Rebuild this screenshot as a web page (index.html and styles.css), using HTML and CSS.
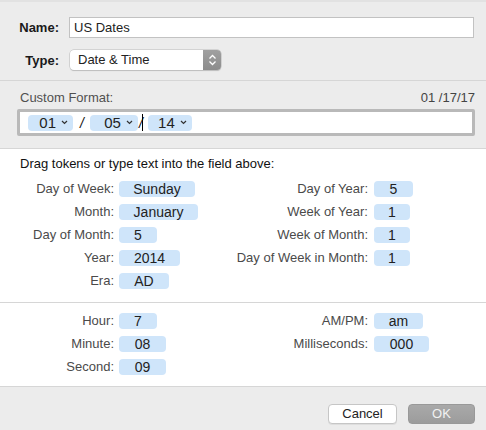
FILE: index.html
```html
<!DOCTYPE html>
<html>
<head>
<meta charset="utf-8">
<link rel="stylesheet" href="styles.css">
</head>
<body>
<div class="dialog">
  <div class="top">
    <div class="row">
      <span class="blabel">Name:</span>
      <div class="textfield">US Dates</div>
    </div>
    <div class="row row-type">
      <span class="blabel">Type:</span>
      <div class="popup">
        <span class="popup-text">Date &amp; Time</span>
        <span class="stepper">
          <svg width="9" height="12" viewBox="0 0 9 12"><path d="M1.5 4.5 L4.5 1.5 L7.5 4.5 M1.5 7.5 L4.5 10.5 L7.5 7.5" fill="none" stroke="#fff" stroke-width="1.3"/></svg>
        </span>
      </div>
    </div>
  </div>
  <div class="format">
    <div class="format-head">
      <span class="format-label">Custom Format:</span>
      <span class="format-preview">01 /17/17</span>
    </div>
    <div class="format-field">
      <span class="ftoken">01<svg class="chev" width="7" height="5" viewBox="0 0 7 5"><path d="M1 1 L3.5 3.5 L6 1" fill="none" stroke="#333" stroke-width="1.2"/></svg></span>
      <span class="slash">/</span>
      <span class="ftoken wide">05<svg class="chev" width="7" height="5" viewBox="0 0 7 5"><path d="M1 1 L3.5 3.5 L6 1" fill="none" stroke="#333" stroke-width="1.2"/></svg></span>
      <span class="slash slash2">/</span><span class="caret"></span>
      <span class="ftoken narrow">14<svg class="chev" width="7" height="5" viewBox="0 0 7 5"><path d="M1 1 L3.5 3.5 L6 1" fill="none" stroke="#333" stroke-width="1.2"/></svg></span>
    </div>
  </div>
  <div class="tokens">
    <div class="hint">Drag tokens or type text into the field above:</div>
    <div class="grid">
      <span class="lbl">Day of Week:</span><span class="tcell"><span class="tok" style="width:76px">Sunday</span></span>
      <span class="lbl">Day of Year:</span><span class="tcell r"><span class="tok" style="width:39px">5</span></span>
      <span class="lbl">Month:</span><span class="tcell"><span class="tok" style="width:79px">January</span></span>
      <span class="lbl">Week of Year:</span><span class="tcell r"><span class="tok" style="width:36px">1</span></span>
      <span class="lbl">Day of Month:</span><span class="tcell"><span class="tok" style="width:38px">5</span></span>
      <span class="lbl">Week of Month:</span><span class="tcell r"><span class="tok" style="width:36px">1</span></span>
      <span class="lbl">Year:</span><span class="tcell"><span class="tok" style="width:61px">2014</span></span>
      <span class="lbl">Day of Week in Month:</span><span class="tcell r"><span class="tok" style="width:36px">1</span></span>
      <span class="lbl">Era:</span><span class="tcell"><span class="tok" style="width:50px">AD</span></span>
      <span class="lbl"></span><span class="tcell r"></span>
    </div>
  </div>
  <div class="tokens time">
    <div class="grid">
      <span class="lbl">Hour:</span><span class="tcell"><span class="tok" style="width:38px">7</span></span>
      <span class="lbl">AM/PM:</span><span class="tcell r"><span class="tok" style="width:49px">am</span></span>
      <span class="lbl">Minute:</span><span class="tcell"><span class="tok" style="width:47px">08</span></span>
      <span class="lbl">Milliseconds:</span><span class="tcell r"><span class="tok" style="width:55px">000</span></span>
      <span class="lbl">Second:</span><span class="tcell"><span class="tok" style="width:47px">09</span></span>
      <span class="lbl"></span><span class="tcell r"></span>
    </div>
  </div>
  <div class="buttons">
    <button class="btn cancel">Cancel</button>
    <button class="btn ok">OK</button>
  </div>
</div>
</body>
</html>
```
FILE: styles.css
```css
html, body {
  margin: 0;
  padding: 0;
}
body {
  width: 486px;
  height: 430px;
  overflow: hidden;
  background: #ececec;
  font-family: "Liberation Sans", Arial, sans-serif;
  font-size: 13px;
  color: #222;
}
.dialog {
  display: flex;
  flex-direction: column;
  height: 430px;
  border-top: 2px solid #e2e2e2;
  box-sizing: border-box;
}
.top {
  padding: 15px 12px 0 0;
  height: 78px;
  box-sizing: border-box;
  display: flex;
  flex-direction: column;
  gap: 11px;
}
.row {
  display: flex;
  align-items: center;
}
.row-type {
  margin-top: 1px;
}
.blabel {
  width: 59px;
  text-align: right;
  font-weight: bold;
  color: #1a1a1a;
}
.textfield {
  margin-left: 10px;
  flex: 1;
  height: 21px;
  box-sizing: border-box;
  border: 1px solid #c2c2c2;
  background: #fff;
  padding: 0 4px;
  line-height: 19px;
  color: #222;
}
.popup {
  margin-left: 11px;
  width: 151px;
  height: 20px;
  box-sizing: border-box;
  display: flex;
  background: #fff;
  border-radius: 4px;
  box-shadow: 0 0 0 0.5px #b9b9b9, 0 1px 1px rgba(0,0,0,0.18);
  overflow: hidden;
}
.popup-text {
  flex: 1;
  padding-left: 8px;
  line-height: 20px;
}
.stepper {
  width: 18px;
  background: linear-gradient(#a0a0a0, #8c8c8c);
  display: flex;
  align-items: center;
  justify-content: center;
}
.format {
  border-top: 1px solid #d6d6d6;
  border-bottom: 1px solid #d6d6d6;
  padding: 8px 11px 0 17px;
  height: 69px;
  box-sizing: border-box;
}
.format-head {
  display: flex;
  justify-content: space-between;
  align-items: center;
  height: 17px;
  padding-left: 3px;
  color: #505050;
}
.format-preview {
  color: #444;
}
.format-field {
  margin-top: 3px;
  height: 27px;
  box-sizing: border-box;
  border: 3px solid #b9b9b9;
  border-radius: 2px;
  background: #fff;
  display: flex;
  align-items: center;
  padding-left: 8px;
}
.ftoken {
  display: inline-flex;
  align-items: center;
  justify-content: flex-end;
  height: 16px;
  width: 45px;
  box-sizing: border-box;
  padding-right: 5px;
  background: #cfe5fa;
  border-radius: 4px;
  font-size: 15px;
  color: #222;
}
.ftoken.wide {
  width: 48px;
}
.ftoken.narrow {
  width: 44px;
}
.chev {
  margin-left: 5px;
}
.slash {
  font-style: italic;
  color: #111;
  margin: 0 6px 0 7px;
  font-size: 14px;
}
.slash2 {
  margin: 0 0 0 1px;
}
.caret {
  width: 1px;
  height: 17px;
  background: #000;
  margin-right: 5px;
  margin-left: -1px;
}
.tokens {
  background: #fff;
  height: 154px;
  box-sizing: border-box;
  border-bottom: 1px solid #d6d6d6;
}
.hint {
  padding: 7px 0 0 20px;
  height: 18px;
  color: #111;
}
.grid {
  margin-top: 7px;
  display: grid;
  grid-template-columns: 114px 140px 114px 1fr;
  grid-auto-rows: 23px;
}
.lbl {
  display: flex;
  justify-content: flex-end;
  color: #4a4a4a;
  line-height: 16px;
  white-space: nowrap;
}
.tcell {
  padding-left: 5px;
}
.tcell.r {
  padding-left: 6px;
}
.tok {
  display: inline-block;
  height: 16px;
  line-height: 16px;
  background: #cfe5fa;
  border-radius: 4px;
  text-align: center;
  color: #222;
  font-size: 14px;
}
.time {
  height: 84px;
}
.time .grid {
  margin-top: 10px;
}
.buttons {
  flex: 1;
  display: flex;
  justify-content: flex-end;
  align-items: flex-start;
  padding: 17px 11px 0 0;
  gap: 11px;
}
.btn {
  font-family: inherit;
  font-size: 13px;
  height: 20px;
  border-radius: 4px;
  padding: 0;
  line-height: 18px;
}
.cancel {
  width: 69px;
  background: #fff;
  color: #222;
  border: 1px solid #c6c6c6;
  box-shadow: 0 1px 0 rgba(0,0,0,0.06);
}
.ok {
  width: 67px;
  background: linear-gradient(#a9a9a9, #9c9c9c);
  color: #f2f2f2;
  border: 1px solid #999;
}
```
